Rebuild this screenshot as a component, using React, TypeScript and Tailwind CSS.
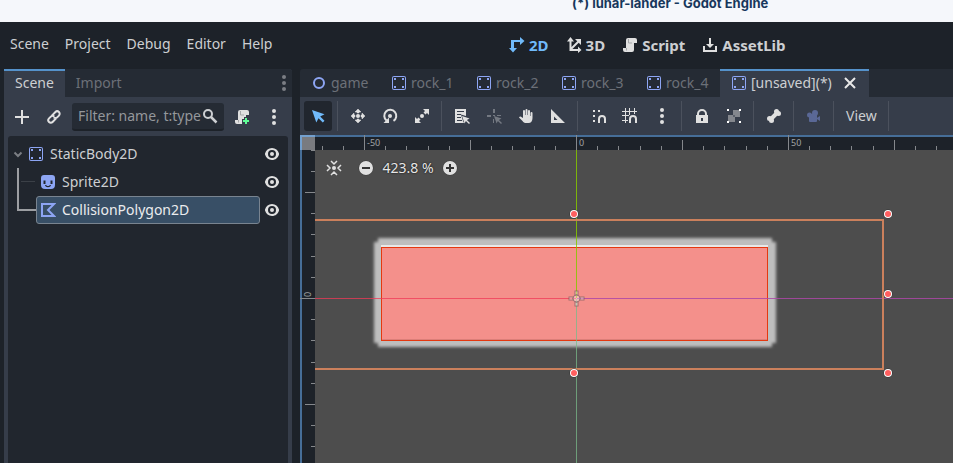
import React from "react";

type P = { children: React.ReactNode; color?: string };

function Icon({ children, color = "#e0e0e0" }: P) {
  return (
    <svg width="16" height="16" viewBox="0 0 16 16" fill={color} className="shrink-0" aria-hidden="true">
      {children}
    </svg>
  );
}

const Body = () => (
  <Icon color="#8da5f3">
    <path
      fillRule="evenodd"
      d="M3 1a2 2 0 0 0-2 2v10a2 2 0 0 0 2 2h10a2 2 0 0 0 2-2V3a2 2 0 0 0-2-2zm0 1h10a1 1 0 0 1 1 1v10a1 1 0 0 1-1 1H3a1 1 0 0 1-1-1V3a1 1 0 0 1 1-1zm0 1v2h2V3zm8 0v2h2V3zM3 11v2h2v-2zm8 0v2h2v-2z"
    />
  </Icon>
);

const Dots = ({ color }: { color?: string }) => (
  <Icon color={color}>
    <circle cx="8" cy="2" r="2" />
    <circle cx="8" cy="8" r="2" />
    <circle cx="8" cy="14" r="2" />
  </Icon>
);

const Scroll = ({ add }: { add?: boolean }) => (
  <Icon>
    <path d="M6 1a2 2 0 0 0-2 2v8H1v2a2 2 0 0 0 2 2h7a2 2 0 0 0 2-2V6h3V3a2 2 0 0 0-2-2z" />
    <path d="M6.500 2v4H10M4.500 11v2.500" fill="none" stroke="#a5a7a9" />
    {add && (
      <>
        <path d="M8 10h2V8h4v2h2v6H8z" fill="#363d4a" />
        <path d="M11 9h2v2h2v2h-2v2h-2v-2H9v-2h2z" fill="#5fff97" />
      </>
    )}
  </Icon>
);

const Eye = () => (
  <Icon>
    <path
      fillRule="evenodd"
      d="M8 2C4.500 2 2 4.200 1 7.500v1C2 11.800 4.500 14 8 14s6-2.200 7-5.500v-1C14 4.200 11.500 2 8 2zm0 2a4 4 0 0 1 0 8 4 4 0 0 1 0-8z"
    />
    <circle cx="8" cy="8" r="2" />
  </Icon>
);

const Magnet = () => <path d="M8 15v-4a3 3 0 0 1 6 0v4" fill="none" stroke="#e0e0e0" strokeWidth="2" />;

const MiniCursor = () => <path d="m8 8 7.500 2.600-2.600 1.300L16 15l-1 1-3.100-3.100-1.300 2.600z" />;

function Tool({ label, children, active }: { label: string; children: React.ReactNode; active?: boolean }) {
  return (
    <button
      aria-label={label}
      className={`flex h-[30px] w-7 shrink-0 items-center justify-center rounded-[3px] ${active ? "bg-[#21262e]" : ""}`}
    >
      {children}
    </button>
  );
}

const Sep = () => <div className="ml-px mr-[2px] h-[30px] w-px shrink-0 bg-[#4b515d]" />;

function SceneTab({ name, icon, width }: { name: string; icon: React.ReactNode; width: string }) {
  return (
    <button
      role="tab"
      aria-selected="false"
      className={`flex shrink-0 items-center gap-1 pl-[11px] text-[#6c7078] ${width}`}
    >
      {icon}
      {name}
    </button>
  );
}

function Mode({ label, children, active }: { label: string; children: React.ReactNode; active?: boolean }) {
  return (
    <button
      className={`flex items-center gap-1 px-2 text-[15px] font-bold ${active ? "text-[#70bafa]" : "text-[#cdcfd2]"}`}
    >
      {children}
      {label}
    </button>
  );
}

const UNIT = 21.19;
const ticks = Array.from({ length: 61 }, (_, i) => i - 20);

function Canvas() {
  const handles = [
    [-2, -84],
    [312, -84],
    [312, -4],
    [312, 75],
    [-2, 75],
  ];
  return (
    <svg className="absolute inset-0 h-full w-full" role="img" aria-label="2D viewport">
      <defs>
        <filter id="soft" x="-5%" y="-10%" width="110%" height="120%">
          <feGaussianBlur stdDeviation="1.6" />
        </filter>
      </defs>
      <rect width="100%" height="100%" fill="#4d4d4d" />
      <g transform="translate(276 163)">
        <g filter="url(#soft)" fill="#bebebe">
          <rect x="-198" y="-60" width="394" height="109" />
          <rect x="-202" y="-56" width="402" height="101" />
        </g>
        <rect x="-195" y="-53" width="387" height="2" fill="#f0f0f0" opacity="0.850" />
        <rect x="-194.500" y="-50.500" width="386" height="93" fill="#f4908b" stroke="#e5380f" />
        <rect x="-194" y="41" width="385" height="1" fill="#dc7f79" />
        <g shapeRendering="crispEdges">
          <rect x="0" y="-163" width="1" height="163" fill="#86c800" opacity="0.850" />
          <rect x="0" y="1" width="1" height="2000" fill="#79b98a" opacity="0.750" />
          <rect x="-276" y="0" width="276" height="1" fill="#f03a57" opacity="0.750" />
          <rect x="1" y="0" width="3000" height="1" fill="#ad48a7" opacity="0.850" />
        </g>
        <path d="M-276-78H307V71H-276" fill="none" stroke="#cb805c" strokeWidth="2" />
        <g fill="#ffffff" fillOpacity="0.350" stroke="#7d5f5f" strokeOpacity="0.700">
          <rect x="-1" y="-7" width="3" height="4" />
          <rect x="-1" y="4" width="3" height="4" />
          <rect x="-7" y="-1" width="4" height="3" />
          <rect x="4" y="-1" width="4" height="3" />
          <circle cx="0.500" cy="0.500" r="3.500" />
        </g>
        {handles.map(([x, y]) => (
          <g key={`${x},${y}`}>
            <circle cx={x} cy={y} r="4.500" fill="#333333" />
            <circle cx={x} cy={y} r="4" fill="#ffffff" />
            <circle cx={x} cy={y} r="3" fill="#ff5f5f" />
          </g>
        ))}
      </g>
      <rect width="100%" height="15" fill="#1d2229" />
      <rect width="15" height="100%" fill="#1d2229" />
      <rect width="100%" height="2" fill="#466e98" />
      <rect width="2" height="100%" fill="#466e98" />
      <g shapeRendering="crispEdges" fill="#85888c">
        {ticks.map((t) => {
          const len = t % 10 === 0 ? 15 : t % 5 === 0 ? 10 : 4;
          const p = Math.round(t * UNIT);
          return (
            <React.Fragment key={t}>
              <rect x={276 + p} y={15 - len} width="1" height={len} />
              <rect x={15 - len} y={163 + p} width={len} height="1" />
            </React.Fragment>
          );
        })}
      </g>
      <rect width="15" height="15" fill="#797b80" />
      <path d="M0 0h15v2H2v13H0z" fill="#73a0cf" />
      <g className="text-[9px]" fill="#a0a2a5">
        <text x="67" y="11">-50</text>
        <text x="279" y="11">0</text>
        <text x="491" y="11">50</text>
        <text transform="translate(11 162) rotate(-90)">0</text>
      </g>
    </svg>
  );
}

export default function App() {
  return (
    <div className="flex h-screen min-h-[300px] flex-col overflow-hidden bg-[#1d2229] font-['Noto_Sans',sans-serif] text-sm leading-5 text-[#cdcfd2]">
      <header className="h-[22px] shrink-0 overflow-hidden bg-[#f5f7fb] pl-[572px]">
        <h1 className="whitespace-nowrap font-['Inter',sans-serif] text-[13px] font-bold leading-[6px] text-[#17375c]">
          (*) lunar-lander - Godot Engine
        </h1>
      </header>

      <nav className="flex h-[47px] shrink-0 items-center pb-1 pl-[2px]">
        <div className="flex w-[499px] shrink-0">
          {["Scene", "Project", "Debug", "Editor", "Help"].map((m) => (
            <button key={m} className="px-2">
              {m}
            </button>
          ))}
        </div>
        <div className="flex gap-px whitespace-nowrap pt-[2px]">
          <Mode label="2D" active>
            <Icon color="#70bafa">
              <path d="M2 3h9V0l4.500 4L11 8V5H5v6h3l-4 4.500L0 11h2z" />
            </Icon>
          </Mode>
          <Mode label="3D">
            <Icon>
              <path
                d="M4.500 3v10H14M5 12l7.500-7.500"
                fill="none"
                stroke="#e0e0e0"
                strokeWidth="2"
              />
              <path d="M4.500 0 8 4.500H1zM15.500 13 12 9.500v6.500zM9 2h6v6z" />
            </Icon>
          </Mode>
          <Mode label="Script">
            <Scroll />
          </Mode>
          <Mode label="AssetLib">
            <Icon>
              <path d="M7 1h2v6h3l-4 4-4-4h3zM1 9h2v4h10V9h2v6H1z" />
            </Icon>
          </Mode>
        </div>
      </nav>

      <div className="flex min-h-0 flex-1 gap-2 pl-1">
        <aside className="flex w-72 shrink-0 flex-col rounded-t-[3px] bg-[#363d4a]">
          <div className="flex h-7 shrink-0 items-stretch rounded-t-[3px] bg-[#252b34]" role="tablist">
            <button role="tab" aria-selected="true" className="border-t-2 border-[#5592cb] bg-[#363d4a] px-[11px] pb-[2px]">
              Scene
            </button>
            <button role="tab" aria-selected="false" className="px-[11px] text-[#6c7078]">
              Import
            </button>
            <button aria-label="Dock options" className="ml-auto flex items-center">
              <Dots color="#7b7e84" />
            </button>
          </div>
          <div className="flex h-[39px] shrink-0 items-center gap-1 px-1">
            <Tool label="Add node">
              <Icon>
                <path d="M7 1h2v6h6v2H9v6H7V9H1V7h6z" />
              </Icon>
            </Tool>
            <Tool label="Instantiate scene">
              <Icon color="none">
                <g transform="rotate(-45 8 8)" stroke="#e0e0e0" strokeWidth="2">
                  <path d="M8.500 10.500H3.500a2.500 2.500 0 0 1 0-5H6a2.500 2.500 0 0 1 2.500 2.500" />
                  <path d="M7.500 5.500h5a2.500 2.500 0 0 1 0 5H10a2.500 2.500 0 0 1-2.500-2.500" />
                </g>
              </Icon>
            </Tool>
            <label className="flex h-7 min-w-0 flex-1 items-center rounded-[3px] border-b-2 border-[#1d2229] bg-[#252b34] pl-[6px] pr-[6px]">
              <input
                aria-label="Filter nodes"
                placeholder="Filter: name, t:type"
                className="min-w-0 flex-1 bg-transparent text-[#cdcfd2] outline-none placeholder:text-[#94979b]"
              />
              <Icon color="none">
                <circle cx="6" cy="6" r="4" stroke="#cdcfd2" strokeWidth="2" />
                <path d="m9 9 5.500 5.500" stroke="#cdcfd2" strokeWidth="2.500" />
              </Icon>
            </label>
            <Tool label="Attach script">
              <Scroll add />
            </Tool>
            <Tool label="More options">
              <Dots />
            </Tool>
          </div>
          <ul className="relative mx-1 flex-1 rounded-t-[3px] bg-[#21262e] pt-1 pr-2">
            <li className="flex h-7 items-center pl-[2px]">
              <button aria-label="Collapse">
                <Icon color="none">
                  <path d="m4.500 6.500 3.500 3.500 3.500-3.500" stroke="#7b7e84" strokeWidth="2" />
                </Icon>
              </button>
              <span className="ml-[2px] flex flex-1 items-center gap-[6px]">
                <Body />
                StaticBody2D
              </span>
              <button aria-label="Toggle StaticBody2D">
                <Eye />
              </button>
            </li>
            <li className="flex h-7 items-center pl-8">
              <span className="flex flex-1 items-center gap-[6px]">
                <Icon color="#8da5f3">
                  <path
                    fillRule="evenodd"
                    d="M4 1a3 3 0 0 0-3 3v7a4 4 0 0 0 4 4h6a4 4 0 0 0 4-4V4a3 3 0 0 0-3-3zM3.500 6.500h2V10h-2zm7 0h2V10h-2zM5 11h1.200c.5 1.300 3.100 1.300 3.600 0H11c-.5 3-5.500 3-6 0z"
                  />
                </Icon>
                Sprite2D
              </span>
              <button aria-label="Toggle Sprite2D">
                <Eye />
              </button>
            </li>
            <li className="flex h-7 items-center gap-1 pl-7">
              <span className="flex h-7 flex-1 items-center gap-[6px] rounded-[3px] border border-[#798490] bg-[#384f66] pl-[3px] text-[#ebecee]">
                <Icon color="none">
                  <path d="M2 2h12l-6 6 6 6H2z" stroke="#8da5f3" strokeWidth="2" />
                </Icon>
                CollisionPolygon2D
              </span>
              <button aria-label="Toggle CollisionPolygon2D">
                <Eye />
              </button>
            </li>
            <svg className="absolute left-[9px] top-8" width="20" height="44" aria-hidden="true">
              <path d="M1 0v42h18" fill="none" stroke="#9c9ea2" strokeWidth="2" />
              <path d="M4 13.500h14" stroke="#3b4047" />
            </svg>
          </ul>
        </aside>

        <main className="flex min-w-0 flex-1 flex-col">
          <div className="flex h-7 shrink-0 overflow-hidden whitespace-nowrap rounded-tl-[3px] bg-[#252b34]" role="tablist">
            <SceneTab
              name="game"
              width="w-20"
              icon={
                <Icon color="none">
                  <circle cx="8" cy="8" r="5" stroke="#8da5f3" strokeWidth="2" />
                </Icon>
              }
            />
            {["rock_1", "rock_2", "rock_3", "rock_4"].map((n) => (
              <SceneTab key={n} name={n} width="w-[85px]" icon={<Body />} />
            ))}
            <div className="flex items-center gap-[10px] border-t-2 border-[#5592cb] bg-[#363d4a] px-[11px] pb-[2px]">
              <button role="tab" aria-selected="true" className="flex items-center gap-1">
                <Body />
                [unsaved](*)
              </button>
              <button aria-label="Close tab">
                <Icon color="none">
                  <path d="m3 3 10 10M13 3 3 13" stroke="#e8e8e8" strokeWidth="2" />
                </Icon>
              </button>
            </div>
          </div>

          <div className="flex h-[38px] shrink-0 items-center gap-1 overflow-hidden bg-[#363d4a] pl-1">
            <Tool label="Select" active>
              <Icon color="#70bafa">
                <path d="m2 2 12.500 4.300-4.300 2.200 4.300 4.300-1.700 1.700-4.300-4.300-2.200 4.300z" />
              </Icon>
            </Tool>
            <Sep />
            <Tool label="Move">
              <Icon>
                <circle cx="8" cy="8" r="2" />
                <path d="m8 1 3 3H9v1H7V4H5zm0 14-3-3h2v-1h2v1h2zM1 8l3-3v2h1v2H4v2zm14 0-3 3V9h-1V7h1V5z" stroke="#e0e0e0" strokeWidth="0.500" />
              </Icon>
            </Tool>
            <Tool label="Rotate">
              <Icon>
                <circle cx="8" cy="8" r="2" />
                <path d="M4.500 12.500A6 6 0 1 1 11.500 12.900" fill="none" stroke="#e0e0e0" strokeWidth="2" />
                <path d="M1.500 15H7V9.500z" />
              </Icon>
            </Tool>
            <Tool label="Scale">
              <Icon>
                <circle cx="8" cy="8" r="2" />
                <path d="M9 1h6v6l-2-2-1.500 1.500-2-2L11 3zM7 15H1V9l2 2 1.500-1.500 2 2L5 13z" />
              </Icon>
            </Tool>
            <Sep />
            <Tool label="List selectable nodes">
              <Icon>
                <path fillRule="evenodd" d="M1 1h11v7L7 6.500 9 13l1 2H1zm2 2v1h7V3zm0 3v1h4V6zm0 3v1h4V9zm0 3v1h5v-1z" />
                <MiniCursor />
              </Icon>
            </Tool>
            <Tool label="Set pivot">
              <Icon color="#747982">
                <path d="M7 1h2v4H7zM1 7h4v2H1zm10 0h4v1h-4zM7 11h1v4H7zM7 7h2v1H7z" />
                <MiniCursor />
              </Icon>
            </Tool>
            <Tool label="Pan">
              <Icon>
                <path d="M5 3a1 1 0 0 1 2 0v4h.500V2a1 1 0 0 1 2 0v5h.500V3a1 1 0 0 1 2 0v5h.500V5a1 1 0 0 1 2 0v5c0 3-1.500 5-4 5H8c-1.500 0-2.500-.500-3.500-2L1 9.500c.600-1.300 1.800-1.300 2.700-.300L5 10z" />
              </Icon>
            </Tool>
            <Tool label="Ruler">
              <Icon>
                <path fillRule="evenodd" d="M1 1v14h14zm3 7.500 3.500 3.500H4z" />
              </Icon>
            </Tool>
            <Sep />
            <Tool label="Smart snap">
              <Icon>
                <path d="M3 2h2v2H3zm5 0h2v2H8zM3 7h2v2H3zm0 5h2v2H3z" />
                <g transform="translate(1 0)">
                  <Magnet />
                </g>
              </Icon>
            </Tool>
            <Tool label="Grid snap">
              <Icon>
                <path
                  d="M3.500 0v15M7.500 0v7M12.500 0v6M0 3.500h15M0 7.500h7M0 12.500h6"
                  fill="none"
                  stroke="#e0e0e0"
                />
                <Magnet />
              </Icon>
            </Tool>
            <Tool label="Snapping options">
              <Dots />
            </Tool>
            <Sep />
            <Tool label="Lock">
              <Icon>
                <path fillRule="evenodd" d="M8 1a5 5 0 0 0-5 5v1H2v8h12V7h-1V6a5 5 0 0 0-5-5zm0 2a3 3 0 0 1 3 3v1H5V6a3 3 0 0 1 3-3zM7 10h2v3H7z" />
              </Icon>
            </Tool>
            <Tool label="Group">
              <Icon>
                <path d="M7 2h7v7H9v5H2V7h5z" fill="#84878d" />
                <path d="M7 7h2v2H7z" fill="#5b606a" />
                <path d="M1 1h2v2H1zm12 0h2v2h-2zM1 13h2v2H1zm12 0h2v2h-2z" fill="#ffffff" />
              </Icon>
            </Tool>
            <Sep />
            <Tool label="Skeleton options">
              <Icon>
                <path d="m4.500 11.500 7-7" stroke="#e0e0e0" strokeWidth="4" />
                <circle cx="10.500" cy="3.500" r="2.500" />
                <circle cx="12.500" cy="5.500" r="2.500" />
                <circle cx="3.500" cy="10.500" r="2.500" />
                <circle cx="5.500" cy="12.500" r="2.500" />
              </Icon>
            </Tool>
            <Sep />
            <Tool label="Camera override">
              <Icon color="#5a6896">
                <circle cx="9" cy="5" r="3" />
                <circle cx="3.500" cy="7" r="2.500" />
                <path d="M3 6h8v7a1 1 0 0 1-1 1H4a1 1 0 0 1-1-1z" />
                <path d="M10 10.500 14 8v5z" />
              </Icon>
            </Tool>
            <Sep />
            <button className="px-[6px]">View</button>
            <Sep />
          </div>

          <section className="relative min-h-0 flex-1 overflow-hidden">
            <Canvas />
            <div className="absolute left-[26px] top-[23px] flex items-center text-[#e6e6e6]">
              <button aria-label="Center view">
                <Icon>
                  <path
                    d="m5 1 3 3 3-3M5 15l3-3 3 3M1 5l3 3-3 3M15 5l-3 3 3 3"
                    fill="none"
                    stroke="#e0e0e0"
                    strokeWidth="1.500"
                  />
                  <circle cx="8" cy="8" r="2" />
                </Icon>
              </button>
              <button aria-label="Zoom out" className="ml-4">
                <Icon>
                  <circle cx="8" cy="8" r="7.500" fill="#3a3a3a" />
                  <circle cx="8" cy="8" r="7" />
                  <path d="M4 7h8v2H4z" fill="#333333" />
                </Icon>
              </button>
              <button className="w-[68px] text-center [text-shadow:0_0_2px_#000]">423.8 %</button>
              <button aria-label="Zoom in">
                <Icon>
                  <circle cx="8" cy="8" r="7.500" fill="#3a3a3a" />
                  <circle cx="8" cy="8" r="7" />
                  <path d="M7 4h2v3h3v2H9v3H7V9H4V7h3z" fill="#333333" />
                </Icon>
              </button>
            </div>
          </section>
        </main>
      </div>
    </div>
  );
}
